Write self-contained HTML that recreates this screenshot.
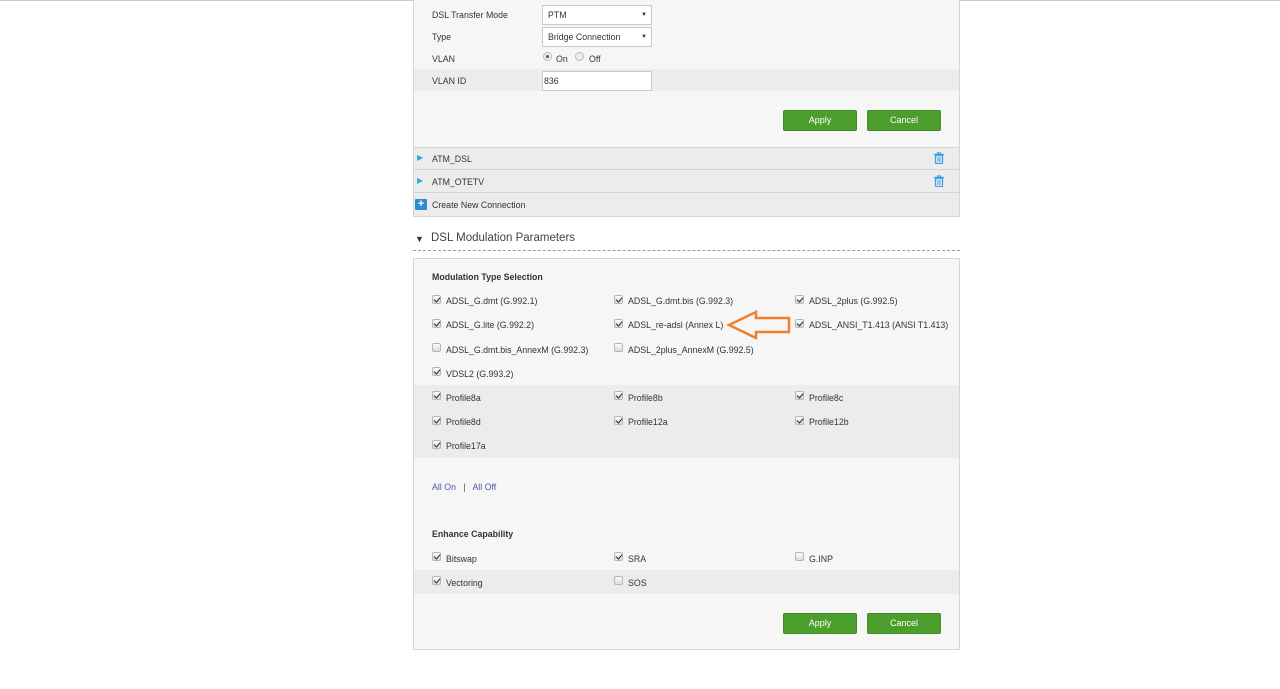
<!DOCTYPE html>
<html><head><style>
*{margin:0;padding:0;box-sizing:border-box}
body{width:1280px;height:689px;background:#fff;position:relative;overflow:hidden;font-family:"Liberation Sans",Arial,sans-serif;font-size:8.8px;color:#333}
.a{position:absolute}
.t{position:absolute;line-height:12px;white-space:nowrap}
.cb{position:absolute;width:9px;height:9px;border:1px solid #b5b5b5;border-radius:2px;background:linear-gradient(#fdfdfd,#dcdcdc)}
.cb.c::after{content:"";position:absolute;left:2px;top:0px;width:3px;height:5px;border:solid #222;border-width:0 1.5px 1.5px 0;transform:rotate(40deg)}
.btn{position:absolute;width:74px;height:21px;background:#4b9d2c;border:1px solid #3f8a24;border-radius:2px;color:#fff;text-align:center;line-height:19px;font-size:9px}
.sel{position:absolute;background:#fff;border:1px solid #c8c8c8;height:20px;padding-left:5px;line-height:18px}
.sel::after{content:"▼";position:absolute;right:4px;top:0;font-size:6px}
.row{position:absolute;left:414px;width:545px}
</style></head><body>
<div class="a" style="left:0;top:0;width:1280px;height:1px;background:#c8c8c8"></div>
<div class="a" style="left:413px;top:0;width:547px;height:217px;background:#f6f6f6;border:1px solid #d5d5d5;border-top:none"></div>
<div class="row" style="top:69px;height:22px;background:#ececec"></div>
<div class="t" style="left:432px;top:9px">DSL Transfer Mode</div>
<div class="sel" style="left:542px;top:5px;width:110px">PTM</div>
<div class="t" style="left:432px;top:31px">Type</div>
<div class="sel" style="left:542px;top:27px;width:110px">Bridge Connection</div>
<div class="t" style="left:432px;top:53px">VLAN</div>
<div class="a" style="left:543px;top:52px;width:9px;height:9px;border:1px solid #bbb;border-radius:50%;background:#eee"><div class="a" style="left:2px;top:2px;width:3px;height:3px;border-radius:50%;background:#555"></div></div>
<div class="t" style="left:556px;top:53px">On</div>
<div class="a" style="left:575px;top:52px;width:9px;height:9px;border:1px solid #bbb;border-radius:50%;background:#eee"></div>
<div class="t" style="left:589px;top:53px">Off</div>
<div class="t" style="left:432px;top:75px">VLAN ID</div>
<div class="a" style="left:542px;top:71px;width:110px;height:20px;background:#fff;border:1px solid #c8c8c8;padding-left:1px;line-height:18px">836</div>
<div class="btn" style="left:783px;top:110px">Apply</div>
<div class="btn" style="left:867px;top:110px">Cancel</div>
<div class="row" style="top:147px;height:23px;background:#ececec;border-top:1px solid #d5d5d5;border-bottom:1px solid #d5d5d5"></div>
<div class="row" style="top:170px;height:23px;background:#ececec;border-bottom:1px solid #d5d5d5"></div>
<div class="row" style="top:193px;height:23px;background:#ececec"></div>
<div class="t" style="left:417px;top:152px;color:#3aa3e0;font-size:8px">▶</div>
<div class="t" style="left:432px;top:153px">ATM_DSL</div>
<svg class="a" style="left:933px;top:152px" width="12" height="12" viewBox="0 0 12 12"><path d="M1 2.5H11M4.5 2.5V1H7.5V2.5M2.5 3.5V10.5Q2.5 11.5 3.5 11.5H8.5Q9.5 11.5 9.5 10.5V3.5Z" fill="none" stroke="#3aa3e0" stroke-width="1.3"/><path d="M5 5V10M7 5V10" stroke="#3aa3e0" stroke-width="1"/></svg>
<div class="t" style="left:417px;top:175px;color:#3aa3e0;font-size:8px">▶</div>
<div class="t" style="left:432px;top:176px">ATM_OTETV</div>
<svg class="a" style="left:933px;top:175px" width="12" height="12" viewBox="0 0 12 12"><path d="M1 2.5H11M4.5 2.5V1H7.5V2.5M2.5 3.5V10.5Q2.5 11.5 3.5 11.5H8.5Q9.5 11.5 9.5 10.5V3.5Z" fill="none" stroke="#3aa3e0" stroke-width="1.3"/><path d="M5 5V10M7 5V10" stroke="#3aa3e0" stroke-width="1"/></svg>
<div class="a" style="left:415px;top:199px;width:12px;height:11px;background:#2d8fd0;border-radius:1px;color:#fff;font-size:11px;line-height:10px;text-align:center;font-weight:bold">+</div>
<div class="t" style="left:432px;top:199px">Create New Connection</div>
<div class="t" style="left:415px;top:233px;font-size:9px">▼</div>
<div class="t" style="left:431px;top:231px;font-size:11.5px;line-height:14px;color:#444">DSL Modulation Parameters</div>
<div class="a" style="left:413px;top:250px;width:547px;border-top:1px dashed #999"></div>
<div class="a" style="left:413px;top:258px;width:547px;height:392px;background:#f6f6f6;border:1px solid #d5d5d5"></div>
<div class="row" style="top:385px;height:73px;background:#ececec"></div>
<div class="row" style="top:570px;height:24px;background:#ececec"></div>
<div class="t" style="left:432px;top:271px;font-weight:bold">Modulation Type Selection</div>

<div class="cb c" style="left:432px;top:295px"></div><div class="t" style="left:446px;top:295px">ADSL_G.dmt (G.992.1)</div>
<div class="cb c" style="left:614px;top:295px"></div><div class="t" style="left:628px;top:295px">ADSL_G.dmt.bis (G.992.3)</div>
<div class="cb c" style="left:795px;top:295px"></div><div class="t" style="left:809px;top:295px">ADSL_2plus (G.992.5)</div>

<div class="cb c" style="left:432px;top:319px"></div><div class="t" style="left:446px;top:319px">ADSL_G.lite (G.992.2)</div>
<div class="cb c" style="left:614px;top:319px"></div><div class="t" style="left:628px;top:319px">ADSL_re-adsl (Annex L)</div>
<div class="cb c" style="left:795px;top:319px"></div><div class="t" style="left:809px;top:319px">ADSL_ANSI_T1.413 (ANSI T1.413)</div>

<div class="cb" style="left:432px;top:343px"></div><div class="t" style="left:446px;top:344px">ADSL_G.dmt.bis_AnnexM (G.992.3)</div>
<div class="cb" style="left:614px;top:343px"></div><div class="t" style="left:628px;top:344px">ADSL_2plus_AnnexM (G.992.5)</div>

<div class="cb c" style="left:432px;top:367px"></div><div class="t" style="left:446px;top:368px">VDSL2 (G.993.2)</div>

<div class="cb c" style="left:432px;top:391px"></div><div class="t" style="left:446px;top:392px">Profile8a</div>
<div class="cb c" style="left:614px;top:391px"></div><div class="t" style="left:628px;top:392px">Profile8b</div>
<div class="cb c" style="left:795px;top:391px"></div><div class="t" style="left:809px;top:392px">Profile8c</div>
<div class="cb c" style="left:432px;top:416px"></div><div class="t" style="left:446px;top:416px">Profile8d</div>
<div class="cb c" style="left:614px;top:416px"></div><div class="t" style="left:628px;top:416px">Profile12a</div>
<div class="cb c" style="left:795px;top:416px"></div><div class="t" style="left:809px;top:416px">Profile12b</div>
<div class="cb c" style="left:432px;top:440px"></div><div class="t" style="left:446px;top:440px">Profile17a</div>

<div class="t" style="left:432px;top:481px;color:#4a5aa0">All On &nbsp;&nbsp;<span style="color:#555">|</span>&nbsp;&nbsp; All Off</div>
<div class="t" style="left:432px;top:528px;font-weight:bold">Enhance Capability</div>
<div class="cb c" style="left:432px;top:552px"></div><div class="t" style="left:446px;top:553px">Bitswap</div>
<div class="cb c" style="left:614px;top:552px"></div><div class="t" style="left:628px;top:553px">SRA</div>
<div class="cb" style="left:795px;top:552px"></div><div class="t" style="left:809px;top:553px">G.INP</div>
<div class="cb c" style="left:432px;top:576px"></div><div class="t" style="left:446px;top:577px">Vectoring</div>
<div class="cb" style="left:614px;top:576px"></div><div class="t" style="left:628px;top:577px">SOS</div>
<div class="btn" style="left:783px;top:613px">Apply</div>
<div class="btn" style="left:867px;top:613px">Cancel</div>
<svg class="a" style="left:726px;top:309px" width="66" height="32" viewBox="0 0 66 32"><path d="M3 16 L30 3 L30 9 L63 9 L63 23 L30 23 L30 29 Z" fill="none" stroke="#f07f2a" stroke-width="2.5" stroke-linejoin="miter"/></svg>
</body></html>
